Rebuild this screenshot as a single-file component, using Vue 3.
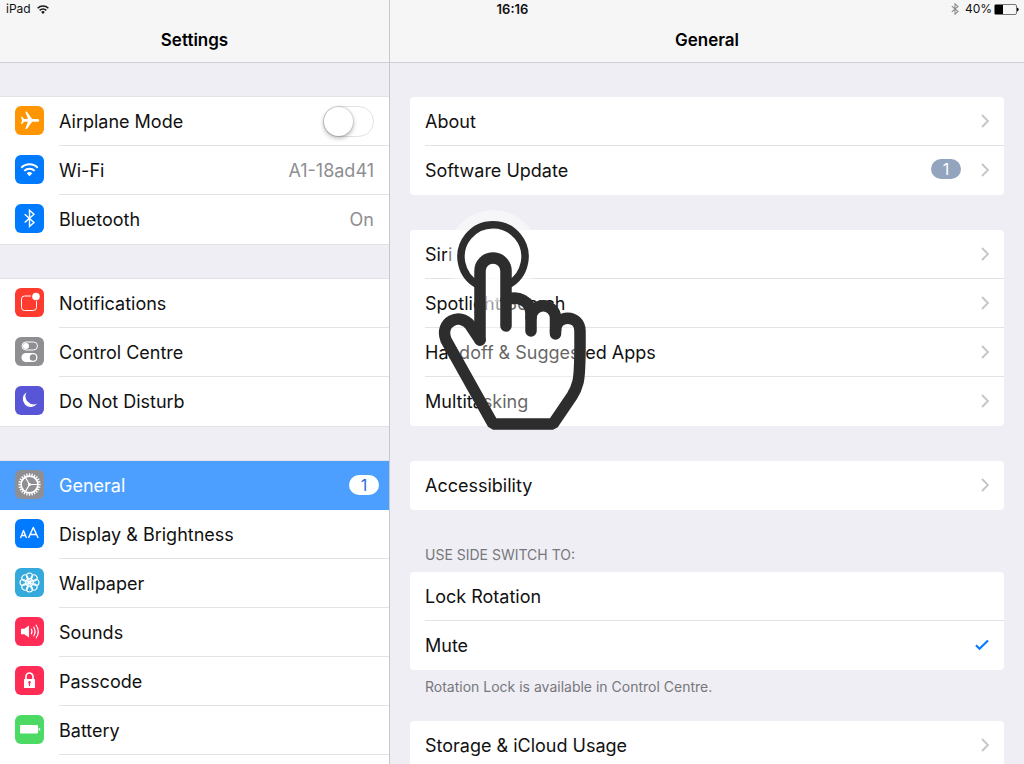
<script setup>
import { ref } from 'vue'

const airplane = ref(false)
const sideSwitch = ref('mute')

const sidebar = [
  [
    { label: 'Airplane Mode', icon: 'plane', tone: 'orange', toggle: true },
    { label: 'Wi-Fi', icon: 'wifi', tone: 'blue', value: 'A1-18ad41' },
    { label: 'Bluetooth', icon: 'bluetooth', tone: 'blue', value: 'On' }
  ],
  [
    { label: 'Notifications', icon: 'bell', tone: 'red' },
    { label: 'Control Centre', icon: 'control', tone: 'grey' },
    { label: 'Do Not Disturb', icon: 'moon', tone: 'purple' }
  ],
  [
    { label: 'General', icon: 'gear', tone: 'grey', badge: 1, active: true },
    { label: 'Display & Brightness', icon: 'display', tone: 'blue' },
    { label: 'Wallpaper', icon: 'flower', tone: 'cyan' },
    { label: 'Sounds', icon: 'sound', tone: 'pink' },
    { label: 'Passcode', icon: 'lock', tone: 'pink' },
    { label: 'Battery', icon: 'battery', tone: 'green' }
  ]
]

const general = [
  [{ label: 'About' }, { label: 'Software Update', badge: 1 }],
  [
    { label: 'Siri' },
    { label: 'Spotlight Search' },
    { label: 'Handoff & Suggested Apps' },
    { label: 'Multitasking' }
  ],
  [{ label: 'Accessibility' }]
]

const switchOptions = [
  { id: 'lock', label: 'Lock Rotation' },
  { id: 'mute', label: 'Mute' }
]

const teeth = Array.from({ length: 24 }, (_, i) => i * 15)
const petals = Array.from({ length: 8 }, (_, i) => i * 45)
</script>

<template>
  <div class="device">
    <svg class="defs" aria-hidden="true">
      <symbol id="i-plane" viewBox="0 0 29 29">
        <path fill="#fff" d="M24.2 14.4c0-.8-.8-1.4-2-1.4h-5.1L11.9 5.7h-1.6l2.6 7.3H9L7.1 10.7H6l1 3.7-1 3.7h1.1L9 15.8h3.9l-2.6 7.3h1.6l5.2-7.3h5.1c1.2 0 2-.6 2-1.4z" />
      </symbol>
      <symbol id="i-wifi" viewBox="0 0 29 29">
        <g fill="none" stroke="#fff" stroke-width="2">
          <path d="M6.3 12.7a11.600 11.600 0 0 1 16.4 0" />
          <path d="M9.3 15.9a7.400 7.400 0 0 1 10.4 0" />
        </g>
        <path fill="#fff" d="M11.7 18.300a4 4 0 0 1 5.600 0l-2.800 3z" />
      </symbol>
      <symbol id="i-bluetooth" viewBox="0 0 29 29">
        <path fill="none" stroke="#fff" stroke-width="1.4" d="M9.7 10.300l9.300 8.200-4.500 4V6.300l4.500 4-9.300 8.300" />
      </symbol>
      <symbol id="i-bell" viewBox="0 0 29 29">
        <path fill="none" stroke="#fff" d="M16 8H9.500Q6.500 8 6.500 11v8.500q0 3 3 3H18q3.500 0 3.500-3V13" />
        <circle cx="21" cy="8.500" r="3.800" fill="#fff" />
      </symbol>
      <symbol id="i-control" viewBox="0 0 29 29">
        <rect x="7" y="5" width="15.500" height="8" rx="4" fill="none" stroke="#fff" />
        <circle cx="11" cy="9" r="3" fill="#fff" />
        <rect x="6.500" y="16" width="16" height="9" rx="4.500" fill="#fff" />
        <circle cx="18" cy="20.500" r="3.200" fill="#8e8e93" />
      </symbol>
      <symbol id="i-moon" viewBox="0 0 29 29">
        <path fill="#fff" d="M11.500 6.200A8 8 0 1 0 22.300 17.600 8.300 8.300 0 0 1 11.500 6.200z" />
      </symbol>
      <symbol id="i-gear" viewBox="0 0 29 29">
        <g stroke="#fff" fill="none">
          <circle cx="14.500" cy="14.500" r="8.400" stroke-width="1.600" />
          <path v-for="a in teeth" :key="a" d="M14.500 5.700V3.300" stroke-width="1.300" :transform="`rotate(${a} 14.500 14.500)`" />
          <path d="M14.500 14.500h8M14.500 14.500l-4-7M14.500 14.500l-4 7" stroke-width="1.200" />
        </g>
        <circle cx="14.500" cy="14.500" r="1.600" fill="#fff" />
      </symbol>
      <symbol id="i-display" viewBox="0 0 29 29">
        <g fill="none" stroke="#fff" stroke-linejoin="round">
          <path d="M5.500 19l3-7.500 3 7.500M6.500 16.500h4" stroke-width="1.300" />
          <path d="M13.500 19l4.800-10.500L23.200 19M15.300 15.500h6" stroke-width="1.400" />
        </g>
      </symbol>
      <symbol id="i-flower" viewBox="0 0 29 29">
        <g fill="none" stroke="#fff" stroke-width="1.100">
          <circle v-for="a in petals" :key="a" cx="14.500" cy="8" r="3" :transform="`rotate(${a} 14.500 14.500)`" />
          <circle v-for="a in petals" :key="'n' + a" cx="14.500" cy="12" r="1.700" stroke-width=".8" :transform="`rotate(${a + 22.5} 14.500 14.500)`" />
        </g>
        <circle cx="14.500" cy="14.500" r="1.600" fill="#fff" />
      </symbol>
      <symbol id="i-sound" viewBox="0 0 29 29">
        <path fill="#fff" d="M6 11.700h3.300L14 8.500v12l-4.700-3.200H6z" />
        <g fill="none" stroke="#fff" stroke-width="1.100">
          <path d="M16.200 11.800q1.700 2.700 0 5.400" />
          <path d="M18.500 9.700q3.200 4.800 0 9.600" />
          <path d="M20.900 7.700q4.800 6.800 0 13.600" />
        </g>
      </symbol>
      <symbol id="i-lock" viewBox="0 0 29 29">
        <path fill="none" stroke="#fff" stroke-width="1.700" d="M11 14v-3.500a3.500 3.500 0 0 1 7 0V14" />
        <rect x="9" y="13" width="11" height="9" rx=".6" fill="#fff" />
        <path fill="#ff2d55" d="M14.500 15a1.400 1.400 0 0 1 .6 2.600V20h-1.200v-2.400a1.400 1.400 0 0 1 .6-2.600z" />
      </symbol>
      <symbol id="i-battery" viewBox="0 0 29 29">
        <rect x="5" y="10" width="18" height="8.500" rx="1" fill="#fff" />
        <path fill="#fff" d="M23.700 12.700q1.500.2 1.500 1.500t-1.500 1.500z" />
      </symbol>
      <symbol id="i-chevron" viewBox="0 0 8 14">
        <path fill="none" stroke="#c4c4c9" stroke-width="1.800" d="M1 1l6 6-6 6" />
      </symbol>
    </svg>

    <div class="status">
      <div class="status-left">
        <span>iPad</span>
        <svg class="status-wifi" viewBox="0 0 12 9" aria-hidden="true">
          <g fill="none" stroke="#1a1a1a" stroke-width="1.500">
            <path d="M.6 3.300a7.600 7.600 0 0 1 10.800 0" />
            <path d="M2.600 5.400a4.800 4.800 0 0 1 6.800 0" />
          </g>
          <path fill="#1a1a1a" d="M4.100 6.900a2.700 2.700 0 0 1 3.800 0L6 8.900z" />
        </svg>
      </div>
      <time class="status-time">16:16</time>
      <div class="status-right">
        <svg class="status-bt" viewBox="0 0 8 12" aria-hidden="true">
          <path fill="none" stroke="#8c8c8c" stroke-width="1.100" d="M.8 3.200l6.200 5.400L4 11.200V.8l3 2.600L.8 8.800" />
        </svg>
        <span>40%</span>
        <svg class="status-cell" viewBox="0 0 25 11" aria-hidden="true">
          <rect x=".5" y=".5" width="22" height="10" rx="1.500" fill="none" stroke="#777" />
          <rect x="1" y="1" width="8" height="9" fill="#000" />
          <path fill="#000" d="M23 3.500q1.700.4 1.700 2t-1.700 2z" />
        </svg>
      </div>
    </div>

    <nav class="pane side" aria-label="Settings">
      <header class="bar"><h1>Settings</h1></header>
      <div class="scroll">
        <ul v-for="(group, g) in sidebar" :key="g" class="group">
          <li v-for="item in group" :key="item.label">
            <component
              :is="item.toggle ? 'label' : 'a'"
              class="row"
              :class="{ active: item.active }"
              :href="item.toggle ? undefined : '#'"
            >
              <span class="tile" :class="item.tone">
                <svg aria-hidden="true"><use :href="`#i-${item.icon}`" /></svg>
              </span>
              <span class="content">
                <span class="name">{{ item.label }}</span>
                <input v-if="item.toggle" v-model="airplane" class="toggle" type="checkbox" role="switch" />
                <span v-if="item.value" class="value">{{ item.value }}</span>
                <span v-if="item.badge" class="badge">{{ item.badge }}</span>
              </span>
            </component>
          </li>
        </ul>
      </div>
    </nav>

    <main class="pane detail">
      <header class="bar"><h1>General</h1></header>
      <div class="scroll">
        <ul v-for="(group, g) in general" :key="g" class="card">
          <li v-for="item in group" :key="item.label">
            <a class="line" href="#">
              <span class="name">{{ item.label }}</span>
              <span v-if="item.badge" class="badge">{{ item.badge }}</span>
              <svg class="chevron" aria-hidden="true"><use href="#i-chevron" /></svg>
            </a>
          </li>
        </ul>

        <fieldset class="choices">
          <legend>USE SIDE SWITCH TO:</legend>
          <div class="card">
            <label v-for="option in switchOptions" :key="option.id" class="line">
              <span class="name">{{ option.label }}</span>
              <input v-model="sideSwitch" class="radio" type="radio" name="side-switch" :value="option.id" />
              <svg v-if="sideSwitch === option.id" class="tick" viewBox="0 0 14 12" aria-hidden="true">
                <path fill="none" stroke="#0a7aff" stroke-width="2.200" d="M1 6.300l3.500 3.500L13 1.500" />
              </svg>
            </label>
          </div>
          <p class="note">Rotation Lock is available in Control Centre.</p>
        </fieldset>

        <ul class="card">
          <li>
            <a class="line" href="#">
              <span class="name">Storage &amp; iCloud Usage</span>
              <svg class="chevron" aria-hidden="true"><use href="#i-chevron" /></svg>
            </a>
          </li>
        </ul>
      </div>

      <svg class="pointer" viewBox="430 200 170 240" aria-hidden="true">
        <circle cx="493" cy="256" r="46" fill="#fff" opacity=".45" />
        <path fill="#fff" opacity=".35" d="M480 340V271a13 13 0 0 1 26 0V300Q531 290 531 312 543 296 555 315 580 312 580 331V374Q580 388 573 397L554 424H493L446 340Q440 322 458 319z" />
        <path fill="#fff" opacity=".35" d="M480 320V271a13 13 0 0 1 26 0v49z" />
        <g fill="none" stroke="#2d2d2d" stroke-width="11.500" stroke-linecap="round" stroke-linejoin="round">
          <path stroke-width="7.500" stroke-linecap="butt" d="M478 285A32 32 0 1 1 508 285" />
          <path d="M480 340V271a13 13 0 0 1 26 0V326" />
          <path d="M506 300C518 295 531 301 531 314V331" />
          <path d="M531 317a12.300 12.300 0 0 1 24.500 0V334" />
          <path stroke-linejoin="bevel" d="M555.500 331C555.500 314 580 314 580 331C580 350 580.500 372 578 382Q576 390 572 396L553 424H493L446 340C439 322 460 312 470 325L480 340" />
        </g>
      </svg>
    </main>
  </div>
</template>

<style>
body {
  margin: 0;
  background: #efeef4;
}
</style>

<style scoped>
.device {
  display: grid;
  grid-template-columns: 390px 1fr;
  grid-template-rows: 16px 1fr;
  height: 100vh;
  overflow: hidden;
  background: #efeef4;
  color: #111;
  font-family: Inter, "Liberation Sans", sans-serif;
  font-size: 18px;
  line-height: 24px;
}

.defs {
  position: absolute;
  width: 0;
  height: 0;
}

.status {
  grid-area: 1 / 1 / 2 / 3;
  z-index: 1;
  display: grid;
  grid-template-columns: 1fr auto 1fr;
  align-items: center;
  padding: 1px 5px 0 6px;
  font-size: 12px;
  line-height: 16px;
}

.status-left,
.status-right {
  display: flex;
  align-items: center;
  gap: 6px;
}

.status-right {
  justify-content: flex-end;
  gap: 2px;
}

.status-time {
  font-size: 13px;
  font-weight: 600;
}

.status-wifi {
  width: 12px;
  height: 9px;
}

.status-bt {
  width: 8px;
  height: 12px;
  margin-right: 4px;
}

.status-cell {
  width: 25px;
  height: 11px;
}

.pane {
  display: flex;
  flex-direction: column;
  min-height: 0;
}

.side {
  grid-area: 1 / 1 / 3 / 2;
  border-right: 1px solid #c8c7cc;
}

.detail {
  grid-area: 1 / 2 / 3 / 3;
  position: relative;
}

.bar {
  display: flex;
  align-items: center;
  justify-content: center;
  padding: 28px 0 10px;
  border-bottom: 1px solid #cfced3;
  background: #f6f6f7;
}

h1 {
  margin: 0;
  font-size: 17px;
  font-weight: 600;
  line-height: 24px;
  color: #000;
}

.scroll {
  flex: 1;
  min-height: 0;
  overflow: auto;
  scrollbar-width: none;
}

ul {
  margin: 0;
  padding: 0;
  list-style: none;
}

.side .scroll {
  display: flex;
  flex-direction: column;
  gap: 35px;
  padding-top: 34px;
}

.group {
  background: #fff;
  box-shadow: 0 -1px #e3e2e7, 0 1px #e3e2e7;
}

.group:last-child {
  flex: 1;
}

.row {
  display: flex;
  height: 49px;
  padding-left: 15px;
  color: inherit;
  text-decoration: none;
}

.tile {
  width: 29px;
  height: 29px;
  margin: 9px 15px 0 0;
  border-radius: 6px;
}

.tile svg {
  display: block;
  width: 29px;
  height: 29px;
}

.orange { background: #ff9500; }
.blue { background: #007aff; }
.red { background: #ff3b30; }
.grey { background: #8e8e93; }
.purple { background: #5856d6; }
.cyan { background: #34aadc; }
.pink { background: #ff2d55; }
.green { background: #4cd964; }

.content {
  flex: 1;
  display: flex;
  align-items: center;
  padding-right: 15px;
  border-bottom: 1px solid #e3e3e6;
}

.group:not(:last-child) > :last-child .content {
  border-color: transparent;
}

.name {
  flex: 1;
  padding-top: 2px;
}

.value {
  padding-top: 2px;
  color: #8e8e93;
}

.active {
  background: #4c9fff;
  color: #fff;
}

.active .content {
  padding-right: 10px;
  border-color: transparent;
}

.badge {
  width: 30px;
  margin-bottom: 1px;
  border-radius: 10px;
  background: #93a4bf;
  color: #fff;
  font-size: 16px;
  line-height: 20px;
  text-align: center;
}

.active .badge {
  background: #fff;
  color: #2668e8;
}

.toggle {
  appearance: none;
  width: 51px;
  height: 31px;
  margin: 0;
  border: 1px solid #e2e2e4;
  border-radius: 16px;
  background: #fff;
}

.toggle::before {
  content: "";
  display: block;
  width: 29px;
  height: 29px;
  border-radius: 50%;
  background: #fff;
  box-shadow: 0 0 1px 1px rgba(0, 0, 0, 0.1), 0 2px 5px rgba(0, 0, 0, 0.3);
}

.toggle:checked {
  background: #4cd964;
}

.toggle:checked::before {
  margin-left: 20px;
}

.detail .scroll {
  padding: 34px 20px 0;
}

.card {
  margin-bottom: 35px;
  border-radius: 4px;
  background: #fff;
}

.line {
  display: flex;
  align-items: center;
  height: 48px;
  margin-left: 15px;
  padding-right: 15px;
  border-bottom: 1px solid #e3e3e6;
  color: inherit;
  text-decoration: none;
}

.card > :last-child .line,
.card > .line:last-child {
  border-color: transparent;
}

.line .badge {
  margin-right: 20px;
  margin-bottom: 3px;
}

.chevron {
  width: 8px;
  height: 14px;
}

.choices {
  margin: 0;
  padding: 0;
  border: 0;
}

legend {
  padding: 0 15px;
  margin-bottom: 7px;
  color: #77777c;
  font-size: 14px;
  line-height: 20px;
}

.choices .card {
  margin-bottom: 7px;
}

.note {
  margin: 0 0 24px;
  padding: 0 15px;
  color: #77777c;
  font-size: 14px;
  line-height: 20px;
}

.radio {
  appearance: none;
  width: 0;
  height: 0;
  margin: 0;
}

.tick {
  width: 14px;
  height: 12px;
}

.pointer {
  position: absolute;
  top: 200px;
  left: 40px;
  width: 170px;
  height: 240px;
  pointer-events: none;
}
</style>
